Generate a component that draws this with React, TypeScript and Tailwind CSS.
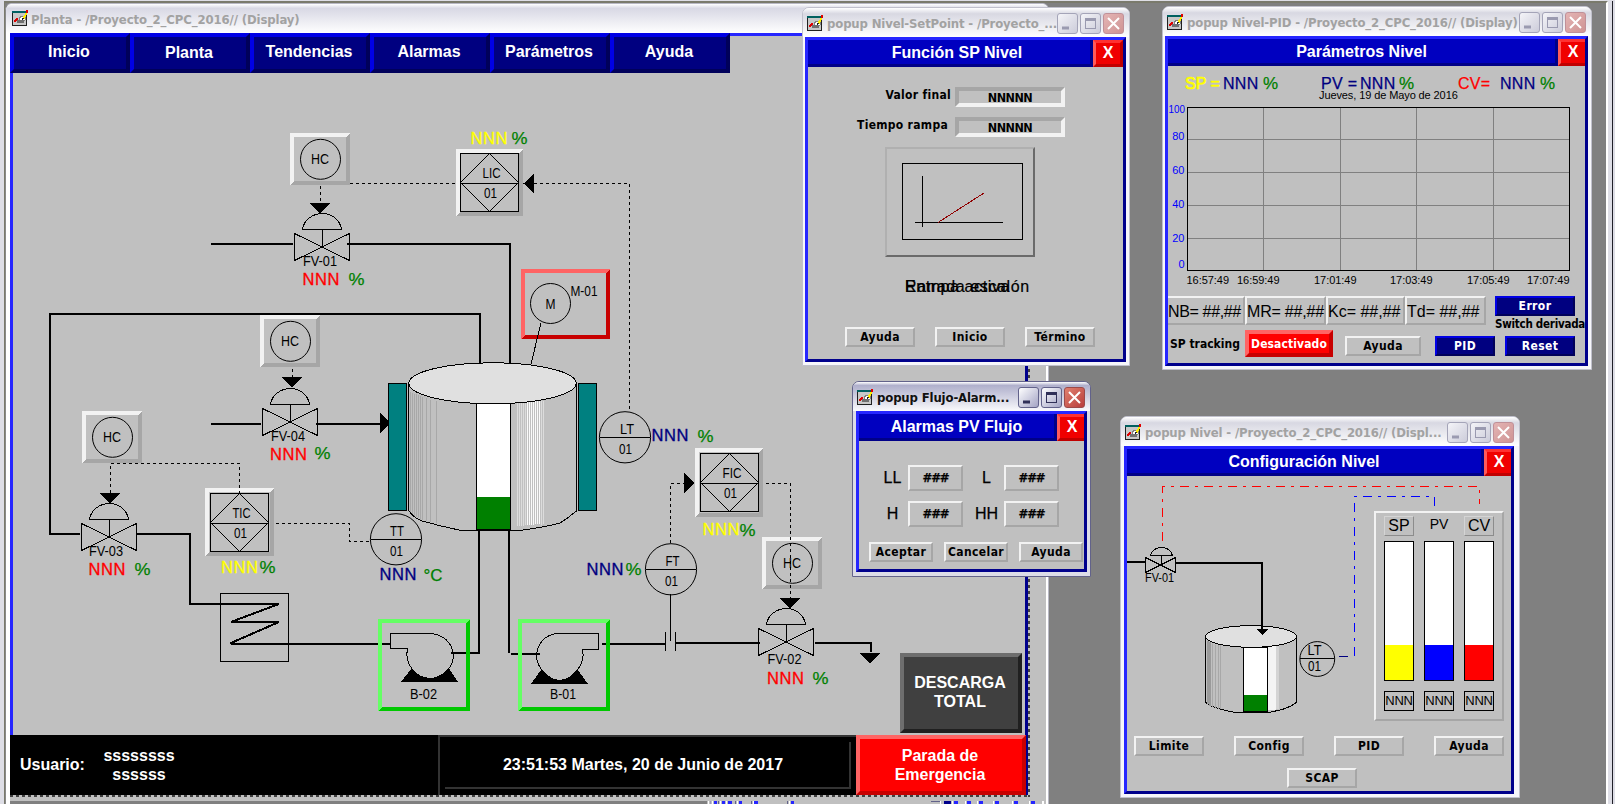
import React from "react";
import clsx from "clsx";

const TAHOMA = "font-['DejaVu_Sans_Condensed','DejaVu_Sans',sans-serif] font-bold";
const RAISED = "border-t-[#f2f2f2] border-l-[#f2f2f2] border-r-[#a6a6a6] border-b-[#a6a6a6]";
const SUNKEN = "border-t-[#a6a6a6] border-l-[#a6a6a6] border-r-[#f2f2f2] border-b-[#f2f2f2]";
const NAVY = "border-t-[#0000e6] border-l-[#0000e6] border-r-[#00005a] border-b-[#00005a] bg-[#000080] text-white";
const RED = "border-t-[#ff6464] border-l-[#ff6464] border-r-[#c80000] border-b-[#c80000] bg-[#ff0000] text-white";

/* ---------- window chrome ---------- */

function AppIcon() {
  return (
    <svg width="17" height="17" viewBox="0 0 17 17" shapeRendering="crispEdges" className="shrink-0">
      <rect x="0.5" y="1.5" width="14" height="14" fill="#c8c8c8" stroke="#202020" />
      <rect x="0" y="1" width="15" height="2" fill="#006060" />
      <path d="M7 8 L10 6 L13 6 L13 10 L8 11 Z" fill="#ffffff" stroke="#808080" />
      <path d="M2.5 12 L4.5 9 L6 10" stroke="#e00000" strokeWidth="2" fill="none" />
      <ellipse cx="8.5" cy="11.5" rx="3.5" ry="2" fill="#707070" />
      <path d="M11.5 8.5 L14.5 3" stroke="#ffee00" strokeWidth="2" />
      <path d="M10 10 L11.5 8" stroke="#202020" strokeWidth="1" />
      <rect x="14" y="0" width="2" height="3" fill="#e00000" />
    </svg>
  );
}

function CaptionButton({ kind, active }: { kind: "min" | "max" | "close"; active?: boolean }) {
  const close = kind === "close";
  const ink = close ? "#ffffff" : active ? "#303058" : "#9a9ab0";
  const fill = close
    ? active
      ? "bg-linear-to-br from-[#e08070] to-[#b83c3c] border-[#9c4a4a]"
      : "bg-linear-to-br from-[#e4b4b4] to-[#cf9494] border-[#c09098]"
    : active
      ? "bg-linear-to-br from-[#ffffff] to-[#a4a4c4] border-[#62628a]"
      : "bg-linear-to-br from-[#f4f4f8] to-[#ccccda] border-[#a4a4b8]";
  return (
    <span className={clsx("flex size-[21px] shrink-0 items-center justify-center rounded-[3px] border", fill)}>
      <svg width="19" height="19" viewBox="0 0 19 19" fill="none" stroke={ink}>
        {kind === "min" && <path d="M4 14 H11" strokeWidth="3" />}
        {kind === "max" && (
          <g shapeRendering="crispEdges">
            <rect x="4.5" y="4.5" width="10" height="10" />
            <path d="M4 5.5 H15" strokeWidth="2" />
          </g>
        )}
        {close && <path d="M4 4 L15 15 M15 4 L4 15" strokeWidth="2" />}
      </svg>
    </span>
  );
}

interface PopupProps {
  frame: string;
  body: string;
  caption: string;
  title: string;
  titleClass?: string;
  closeClass: string;
  active?: boolean;
  children: React.ReactNode;
}

function Popup({ frame, body, caption, title, titleClass, closeClass, active, children }: PopupProps) {
  return (
    <section
      className={clsx(
        "absolute flex flex-col rounded-t-[7px] border",
        active ? "border-[#62628a] bg-[#dcdce8]" : "border-[#c0c0cc] bg-[#f6f6fa]",
        frame,
      )}
    >
      <div
        className={clsx(
          "flex h-[29px] shrink-0 items-center rounded-t-[6px] bg-linear-to-b from-[#ffffff] pt-px pr-[5px] pl-[4px]",
          active ? "via-[#b0b0cc] via-12% to-[#fafafc]" : "via-[#d8d8e2] via-20% to-[#ffffff]",
        )}
      >
        <AppIcon />
        <span
          className={clsx(
            TAHOMA,
            "ml-[3px] min-w-0 flex-1 pt-[2px] text-[13px] leading-[18px] tracking-[-0.14px] whitespace-nowrap",
            active ? "text-[#101010]" : "text-[#a2a2a2]",
          )}
        >
          {caption}
        </span>
        <span className="flex gap-[2px]">
          <CaptionButton kind="min" active={active} />
          <CaptionButton kind="max" active={active} />
          <CaptionButton kind="close" active={active} />
        </span>
      </div>
      <div
        className={clsx(
          "flex min-h-0 flex-1 flex-col overflow-hidden border-[3px] border-t-[#2626ff] border-r-[#00008c] border-b-[#00008c] border-l-[#2626ff] bg-[#c0c0c0]",
          body,
        )}
      >
        <header className="flex h-[27px] shrink-0">
          <h2
            className={clsx(
              "flex-1 border-r-[3px] border-b-[3px] border-[#000088] bg-[#0000c0] text-center text-[16px] leading-[25px] font-bold text-white",
              titleClass,
            )}
          >
            {title}
          </h2>
          <button
            className={clsx(
              "h-[27px] border-[3px] border-t-[#ff3030] border-r-[#c00000] border-b-[#c00000] border-l-[#ff5a5a] bg-[#f00000] pb-[2px] text-center text-[16px] leading-[18px] font-bold text-white",
              closeClass,
            )}
          >
            X
          </button>
        </header>
        {children}
      </div>
    </section>
  );
}

function Btn({ children, className, tone = RAISED }: { children: React.ReactNode; className?: string; tone?: string }) {
  return (
    <button
      className={clsx(
        TAHOMA,
        "flex h-[20px] shrink-0 items-center justify-center border-2 text-[12px] leading-[14px] tracking-[0.4px] whitespace-nowrap",
        tone,
        className,
      )}
    >
      {children}
    </button>
  );
}

/* ---------- SVG primitives for the process diagrams ---------- */

function Bevel({ x, y, w, h, t = 4, light = "#f2f2f2", dark = "#a6a6a6" }: { x: number; y: number; w: number; h: number; t?: number; light?: string; dark?: string }) {
  return (
    <g>
      <path d={`M${x} ${y} h${w} l${-t} ${t} h${2 * t - w} v${h - 2 * t} l${-t} ${t} Z`} fill={light} />
      <path d={`M${x + w} ${y + h} h${-w} l${t} ${-t} h${w - 2 * t} v${2 * t - h} l${t} ${-t} Z`} fill={dark} />
    </g>
  );
}

function Label({ x, y, w, size = 14, children }: { x: number; y: number; w: number; size?: number; children: string }) {
  return (
    <text x={x} y={y} fontSize={size} textLength={w} lengthAdjust="spacingAndGlyphs" fill="#000">
      {children}
    </text>
  );
}

function Reading({ x, y, color, ux, uy, unit = "%" }: { x: number; y: number; color: string; ux: number; uy: number; unit?: string }) {
  return (
    <g>
      <text x={x - 1} y={y} fontSize="16.5" textLength="37" fill={color} stroke={color} strokeWidth="0.35">NNN</text>
      <text x={ux - 0.5} y={uy} fontSize="16.5" textLength={unit === "%" ? 16 : 19} lengthAdjust="spacingAndGlyphs" fill="#008000" stroke="#008000" strokeWidth="0.25">{unit}</text>
    </g>
  );
}

const thin = { fill: "none", stroke: "#000", strokeWidth: 1 } as const;
const pipe = { fill: "none", stroke: "#000", strokeWidth: 2 } as const;
const dash = { fill: "none", stroke: "#000", strokeWidth: 1, strokeDasharray: "3 3" } as const;

function HandControl({ x, y }: { x: number; y: number }) {
  return (
    <g>
      <Bevel x={x} y={y} w={60} h={52} />
      <circle cx={x + 30.5} cy={y + 26.3} r="20" {...thin} shapeRendering="auto" />
      <Label x={x + 21} y={y + 31} w={18}>HC</Label>
    </g>
  );
}

function Valve({ x, y, name, lx, ly }: { x: number; y: number; name: string; lx: number; ly: number }) {
  return (
    <g>
      <path d={`M${x - 27.5} ${y - 13.5} V${y + 13.5} L${x + 27.5} ${y - 13.5} V${y + 13.5} Z`} {...thin} />
      <path d={`M${x + 0.5} ${y} V${y - 17.5}`} {...thin} />
      <path d={`M${x - 19.5} ${y - 17.5} C${x - 18} ${y - 28} ${x - 8} ${y - 33.5} ${x} ${y - 33.5} C${x + 9} ${y - 33.5} ${x + 18} ${y - 28} ${x + 19.5} ${y - 17.5} Z`} {...thin} />
      <Label x={lx} y={ly} w={34}>{name}</Label>
    </g>
  );
}

function Controller({ x, y, name, w }: { x: number; y: number; name: string; w: number }) {
  return (
    <g>
      <rect x={x} y={y} width="58" height="58" {...thin} />
      <path d={`M${x} ${y + 30} H${x + 58} M${x} ${y + 29} L${x + 29} ${y} L${x + 58} ${y + 29} L${x + 29} ${y + 58} Z`} {...thin} />
      <Label x={x + 22} y={y + 24.5} w={w}>{name}</Label>
      <Label x={x + 23.5} y={y + 44.5} w={13}>01</Label>
    </g>
  );
}

function Transmitter({ x, y, name, dx }: { x: number; y: number; name: string; dx: number }) {
  return (
    <g>
      <circle cx={x} cy={y} r="25.6" {...thin} shapeRendering="auto" />
      <path d={`M${x - 25} ${y + 0.2} H${x + 25}`} {...thin} />
      <Label x={x + dx} y={y - 3} w={14}>{name}</Label>
      <Label x={x - 6} y={y + 17} w={13}>01</Label>
    </g>
  );
}

function PlantDiagram() {
  return (
    <svg
      width="1015"
      height="662"
      viewBox="10 73 1015 662"
      shapeRendering="crispEdges"
      className="block shrink-0"
      fontFamily="'Liberation Sans', Arial, sans-serif"
    >
      {/* pipes */}
      <g {...pipe}>
        <path d="M211 244 H293 M347 244 H510 V363" />
        <path d="M80 534 H50 V314 H480 V363" />
        <path d="M136 534 H190 V604 H279 L231 622 H279 L231 643 L232 644 H390" />
        <path d="M211 424 H261 M316 424 H382" />
        <path d="M451 653 H479 V531 M509 531 V653 M511 654 H540" />
        <path d="M602 644 H666 M675 643 H760 M815 643 H871 V652" />
      </g>
      <rect x="220.5" y="593.5" width="68" height="68" {...thin} />

      {/* hand stations and controllers */}
      <HandControl x={290} y={133} />
      <HandControl x={260} y={315} />
      <HandControl x={82} y={411} />
      <HandControl x={762} y={537} />
      <Bevel x={456} y={149} w={67} h={67} />
      <Controller x={460.5} y={153.5} name="LIC" w={18} />
      <Bevel x={205} y={488} w={69} h={68} />
      <Controller x={210.5} y={493.5} name="TIC" w={18} />
      <Bevel x={695} y={448} w={68} h={69} />
      <Controller x={700.5} y={453.5} name="FIC" w={19} />

      {/* signals */}
      <g {...dash}>
        <path d="M350 183.5 H456 M534 183.5 H629.5 V411" />
        <path d="M320.5 186 V203 M292.5 369 V377" />
        <path d="M110.5 493 V463.5 H239.5 V493" />
        <path d="M276 523.5 H349.5 V541.5 H371" />
        <path d="M670.5 543 V483.5 H684 M766 483.5 H790.5 V598" />
      </g>
      <g fill="#000">
        <path d="M310 203 H330 L320 213.5 Z" />
        <path d="M282 377 H302 L292 387.5 Z" />
        <path d="M100 493 H120 L110 503.5 Z" />
        <path d="M780 598 H800 L790 608.5 Z" />
        <path d="M860 653 H880 L870 663.5 Z" />
        <path d="M534 173.5 V193.5 L523.5 183.5 Z" />
        <path d="M684 473 V493 L694.5 483 Z" />
        <path d="M380 413 V433 L390.5 423 Z" />
      </g>

      {/* valves */}
      <Valve x={322} y={247} name="FV-01" lx={303} ly={266} />
      <Valve x={290} y={422} name="FV-04" lx={271} ly={440.5} />
      <Valve x={109} y={537} name="FV-03" lx={89} ly={555.5} />
      <Valve x={786} y={642} name="FV-02" lx={767.5} ly={663.5} />

      {/* agitator motor */}
      <Bevel x={521} y={269} w={89} h={70} light="#ff6464" dark="#c80000" />
      <circle cx="550.5" cy="303.5" r="20" {...thin} shapeRendering="auto" />
      <Label x={545.5} y={309} w={10}>M</Label>
      <Label x={570.5} y={296} w={27}>M-01</Label>
      <path d="M541 323 L531 364" {...thin} />

      {/* tank */}
      <path d="M408.5 383 V510 Q412 517 422 521 Q440 526 461 530.5 H520 Q545 527 560 523 Q568 518 576.5 511 V383" {...thin} fill="#c0c0c0" />
      <path d="M410.5 392V512 M412.5 393V514 M414.5 394V516 M416.5 394V517 M418.5 395V518 M420.5 396V520 M422.5 397V520 M426.5 398V521 M430.5 400V522 M436.5 401V523" stroke="#a8a8a8" fill="none" />
      <path d="M517.5 403V526 M519.5 403V526 M521.5 402V526 M523.5 402V526 M525.5 402V525 M541.5 401V525 M543.5 401V524" stroke="#dcdcdc" fill="none" />
      <path d="M527.5 402V525 M529.5 402V525 M531.5 402V525 M533.5 402V525 M535.5 401V524 M537.5 401V524 M539.5 401V524" stroke="#fafafa" fill="none" />
      <ellipse cx="492.5" cy="383.3" rx="83.7" ry="20.5" fill="#e0e0e0" stroke="#000" />
      <rect x="476.5" y="403.5" width="34" height="126" fill="#fff" stroke="#000" />
      <rect x="477" y="497" width="33" height="32" fill="#008000" />
      <path d="M476 530 H511" {...pipe} />
      <rect x="388.5" y="383.5" width="18" height="127" fill="#008080" stroke="#000" />
      <rect x="578.5" y="383.5" width="18" height="127" fill="#008080" stroke="#000" />

      {/* transmitters */}
      <Transmitter x={396} y={539.3} name="TT" dx={-6} />
      <Transmitter x={625} y={437.3} name="LT" dx={-5} />
      <Transmitter x={671} y={569.3} name="FT" dx={-5.5} />
      <path d="M670.5 594 V641 M665.5 632 V651 M675.5 632 V651" {...thin} />

      {/* pumps */}
      <Bevel x={378} y={619} w={92} h={92} light="#64ff64" dark="#00c800" />
      <path d="M390.5 633.5 H430 C443 634 453 643 453.5 656 C453 668 442 678 430 678.5 C416 678 404 664 407.5 648.5 H390.5 Z" {...thin} />
      <path d="M411 669 Q420 678 430 678.5 Q441 678 449 668.5 L458 682 H401 Z" />
      <Label x={410} y={699} w={27}>B-02</Label>
      <Bevel x={518} y={619} w={92} h={92} light="#64ff64" dark="#00c800" />
      <path d="M598.5 633.5 H558 C546 634 537 643 536.5 656 C537 668 548 680 560 680.5 C573 679 586 664 582.5 649.5 H598.5 Z" {...thin} />
      <path d="M541 670 Q550 680 560 680.5 Q571 679 578 670 L588 684 H531 Z" />
      <Label x={550} y={699} w={26}>B-01</Label>

      {/* readings */}
      <Reading x={303.5} y={285} color="#ff0000" ux={349} uy={285} />
      <Reading x={271} y={460} color="#ff0000" ux={315} uy={459} />
      <Reading x={89.5} y={575} color="#ff0000" ux={135} uy={575} />
      <Reading x={768} y={684} color="#ff0000" ux={813} uy={684} />
      <Reading x={471.5} y={143.5} color="#ffff00" ux={512} uy={144} />
      <Reading x={222} y={573} color="#ffff00" ux={260} uy={573} />
      <Reading x={703.5} y={534.5} color="#ffff00" ux={740} uy={535.5} />
      <Reading x={380.5} y={580} color="#000080" ux={424} uy={581} unit="°C" />
      <Reading x={652.5} y={441} color="#000080" ux={698} uy={441.5} />
      <Reading x={587.5} y={575} color="#000080" ux={626} uy={575} />
    </svg>
  );
}

/* ---------- main window ---------- */

const NAV = ["Inicio", "Planta", "Tendencias", "Alarmas", "Parámetros", "Ayuda"];

const TICKS: [number, number, string][] = [
  [708, 1, "#ffffff"], [710, 1, "#9a9ab8"], [712, 1, "#ffffff"], [714, 3, "#2626ff"], [718, 1, "#62628a"], [720, 1, "#ffffff"],
  [722, 3, "#2626ff"], [726, 1, "#ffffff"], [728, 4, "#2626ff"], [735, 1, "#62628a"], [737, 1, "#ffffff"], [739, 3, "#2626ff"],
  [751, 1, "#62628a"], [753, 1, "#ffffff"], [754, 4, "#2626ff"], [787, 1, "#62628a"], [789, 1, "#ffffff"], [791, 3, "#2626ff"],
  [940, 1, "#ffffff"], [944, 7, "#00008c"], [952, 1, "#ffffff"], [954, 4, "#2626ff"], [965, 1, "#ffffff"], [967, 4, "#2626ff"],
  [977, 1, "#ffffff"], [979, 4, "#2626ff"], [993, 1, "#ffffff"], [995, 4, "#2626ff"], [1012, 1, "#ffffff"], [1014, 4, "#2626ff"],
  [1029, 1, "#ffffff"], [1031, 4, "#2626ff"], [1042, 2, "#ffffff"],
];

function MainWindow() {
  return (
    <section className="absolute top-[3px] left-[5px] flex h-[801px] w-[1044px] flex-col overflow-hidden rounded-t-[7px] border-t border-r border-l border-[#b8b8c4] border-l-[#8a8a8a] bg-white">
      <div className="flex h-[29px] shrink-0 items-center bg-linear-to-b from-[#ffffff] via-[#d8d8e4] via-15% to-[#ffffff] pl-[6px]">
        <AppIcon />
        <span className={clsx(TAHOMA, "ml-[2px] pt-[3px] text-[13px] leading-[18px] tracking-[-0.12px] whitespace-nowrap text-[#a2a2a2]")}>
          Planta - /Proyecto_2_CPC_2016// (Display)
        </span>
      </div>
      <div className="ml-[4px] mr-[2px] flex flex-1 bg-[#c0c0c0]">
        <div className="flex w-[1020px] shrink-0 flex-col">
          <div className="relative flex h-[762px] w-[1018px] shrink-0 flex-col border-t-[3px] border-r-[3px] border-l-[3px] border-t-[#2626ff] border-r-[#00008c] border-l-[#2626ff]">
            <nav className="-mt-[3px] -ml-[3px] flex">
              {NAV.map((item) => (
                <button
                  key={item}
                  className={clsx("h-[40px] w-[120px] border-4 pr-[2px] text-center text-[16px] font-bold", NAVY, item === "Planta" ? "pb-px" : "pb-[3px]")}
                >
                  {item}
                </button>
              ))}
            </nav>
            <div className="-ml-[3px] w-[1015px]">
              <svg width="3" height="662" className="float-left mr-[-3px] block">
                <rect width="3" height="662" fill="#2626ff" />
              </svg>
              <PlantDiagram />
            </div>
            <button className="absolute top-[617px] left-[887px] h-[80px] w-[122px] border-4 border-t-[#6e6e6e] border-r-[#202020] border-b-[#202020] border-l-[#6e6e6e] bg-[#404040] pr-[2px] pb-[3px] text-[16px] leading-[19px] font-bold text-white">
              DESCARGA
              <br />
              TOTAL
            </button>
            <footer className="-mr-px -ml-[3px] flex h-[60px] shrink-0 bg-black text-[16px] leading-[19px] font-bold text-white">
              <div className="flex w-[428px] items-center pl-[10px]">
                <span className="w-[83px] pb-[2px]">Usuario:</span>
                <span className="w-[72px] text-center">
                  ssssssss
                  <br />
                  ssssss
                </span>
              </div>
              <div className="flex w-[418px] border-t-2 border-l-2 border-[#333333] pt-[5px] pr-[5px] pb-[6px] pl-[5px]">
                <div className="flex flex-1 items-center justify-center border-r-2 border-b-2 border-[#333333] pr-[8px]">
                  23:51:53 Martes, 20 de Junio de 2017
                </div>
              </div>
              <button className={clsx("h-[60px] w-[170px] border-4 pr-[2px]", RED)}>
                Parada de
                <br />
                Emergencia
              </button>
            </footer>
          </div>
          <div className="h-[2px] w-[1020px] bg-[repeating-linear-gradient(90deg,#404040_0_3px,#c0c0c0_3px_6px)]" />
          <svg width="1036" height="7" viewBox="10 797 1036 7" shapeRendering="crispEdges" className="block">
            <rect x="10" y="801" width="697" height="3" fill="#808080" />
            {TICKS.map(([x, w, fill]) => (
              <rect key={x} x={x} y="801" width={w} height="3" fill={fill} />
            ))}
            <rect x="931" y="801" width="9" height="1" fill="#62628a" />
          </svg>
        </div>
        <div className="-ml-[2px] h-[764px] w-[2px] bg-[repeating-linear-gradient(180deg,#404040_0_3px,#c0c0c0_3px_6px)]" />
      </div>
    </section>
  );
}

/* ---------- popups ---------- */

function SetPointPopup() {
  return (
    <Popup
      frame="left-[802px] top-[7px] h-[359px] w-[328px]"
      body="ml-[2px] mr-[3px] mb-[3px]"
      caption="popup Nivel-SetPoint - /Proyecto_..."
      title="Función SP Nivel"
      titleClass="pl-[16px]"
      closeClass="w-[30px]"
    >
      <div className="mt-[20px] mr-[58px] flex flex-col gap-[10px]">
        {["Valor final", "Tiempo rampa"].map((name) => (
          <label key={name} className={clsx(TAHOMA, "flex items-center justify-end gap-[4px] text-[12px] tracking-[0.3px]")}>
            <span className={clsx("pb-[4px] leading-[14px]", name === "Tiempo rampa" && "mr-[3px]")}>{name}</span>
            <span className={clsx("h-[20px] w-[110px] border-4 text-center text-[12.5px] leading-[13px] tracking-[-0.5px]", SUNKEN)}>NNNNN</span>
          </label>
        ))}
      </div>
      <div className="mt-[10px] ml-[77px] h-[110px] w-[150px] border-2 border-t-[#b0b0b0] border-r-[#6a6a6a] border-b-[#6a6a6a] border-l-[#b0b0b0]">
        <svg width="146" height="106" viewBox="887 149 146 106" fill="none" stroke="#000" shapeRendering="crispEdges">
          <rect x="902.5" y="163.5" width="120" height="76" />
          <path d="M922.5 176 V227 M915 222.5 H1003" />
          <path d="M938 222.5 L984 193" stroke="#900000" />
        </svg>
      </div>
      <div className="mt-[20px] ml-[97px] grid text-[16px] leading-[20px] [-webkit-text-stroke:0.2px_#000]">
        <span className="col-start-1 row-start-1 tracking-[0.6px]">Entrada escalón</span>
        <span className="col-start-1 row-start-1 tracking-[0.6px]">Rampa activa</span>
      </div>
      <div className="mt-[30px] ml-[37px] flex gap-[20px]">
        <Btn className="w-[70px]">Ayuda</Btn>
        <Btn className="w-[70px]">Inicio</Btn>
        <Btn className="w-[70px]">Término</Btn>
      </div>
    </Popup>
  );
}

const TIMES: [string, number][] = [
  ["16:57:49", 1187], ["16:59:49", 1237.5], ["17:01:49", 1314.5], ["17:03:49", 1390.5], ["17:05:49", 1467.5], ["17:07:49", 1527.5],
];
const SCALE: [string, number][] = [["100", 113], ["80", 140], ["60", 174], ["40", 208], ["20", 242], ["0", 268]];

function TrendChart() {
  return (
    <svg width="417" height="187" viewBox="1168 101 417 187" shapeRendering="crispEdges" className="block shrink-0" fontFamily="'Liberation Sans', Arial, sans-serif" fontSize="11">
      <path d="M1263.5 108V270 M1340.5 108V270 M1416.5 108V270 M1493.5 108V270 M1188 139.5H1569 M1188 172.5H1569 M1188 205.5H1569 M1188 238.5H1569" stroke="#808080" />
      <rect x="1187.5" y="107.5" width="382" height="163" fill="none" stroke="#000" />
      {SCALE.map(([t, y]) => (
        <text key={t} x={t === "100" ? 1185 : 1184.5} y={y} textAnchor="end" fill="#0000ff" textLength={t === "100" ? 16.5 : undefined} lengthAdjust="spacingAndGlyphs">
          {t}
        </text>
      ))}
      {TIMES.map(([t, x]) => (
        <text key={t} x={x - 0.5} y="284" textLength="42.5">{t}</text>
      ))}
    </svg>
  );
}

function Pct() {
  return <span className="text-[17px] text-[#008000] [-webkit-text-stroke:0.25px_#008000]">%</span>;
}

function PidPopup() {
  return (
    <Popup
      frame="left-[1162px] top-[6px] h-[364px] w-[430px]"
      body="ml-[2px] mr-[3px] mb-[3px]"
      caption="popup Nivel-PID - /Proyecto_2_CPC_2016// (Display)"
      title="Parámetros Nivel"
      closeClass="w-[27px] border-r-0"
    >
      <div className="mt-[9px] flex h-[18px] shrink-0 pl-[17px] text-[16px] leading-[18px] tracking-[0.3px] whitespace-nowrap text-[#000080] [-webkit-text-stroke:0.25px_#000080]">
        <div className="flex w-[136px]">
          <span className="w-[38px] tracking-[0] text-[#ffff00] [-webkit-text-stroke:0.7px_#ffff00]">SP =</span>
          <span className="w-[40px]">NNN</span>
          <Pct />
        </div>
        <div className="flex w-[137px]">
          <span className="w-[39px]">PV =</span>
          <span className="w-[39px]">NNN</span>
          <Pct />
        </div>
        <div className="flex">
          <span className="w-[42px] text-[#ff0000] [-webkit-text-stroke:0.25px_#ff0000]">CV=</span>
          <span className="w-[40px]">NNN</span>
          <Pct />
        </div>
      </div>
      <div className="-mt-[3px] mb-px h-[10px] shrink-0 pl-[151px] text-[11px] leading-[11px] tracking-[-0.1px] whitespace-nowrap">Jueves, 19 de Mayo de 2016</div>
      <TrendChart />
      <div className="mt-[8px] flex h-[29px] shrink-0">
        {[
          ["NB= ##,##", "w-[77px] border-l-0 tracking-[-0.35px]"],
          ["MR= ##,##", "w-[81px] tracking-[-0.2px]"],
          ["Kc= ##,##", "w-[79px] tracking-[0]"],
          ["Td= ##,##", "w-[81px] tracking-[0]"],
        ].map(([t, c]) => (
          <div key={t} className={clsx("overflow-visible border-2 text-[16px] leading-[27px] whitespace-nowrap", RAISED, c)}>
            {t}
          </div>
        ))}
        <div className="ml-[9px] flex flex-col">
          <Btn tone={NAVY} className="w-[80px]">Error</Btn>
          <span className={clsx(TAHOMA, "text-[11.5px] leading-[16px] tracking-[-0.25px] whitespace-nowrap")}>Switch derivada</span>
        </div>
      </div>
      <div className="mt-[5px] flex items-center pl-[2px]">
        <span className={clsx(TAHOMA, "w-[75px] shrink-0 text-[12px] leading-[14px] whitespace-nowrap")}>SP tracking</span>
        <Btn tone={RED} className="h-[27px] w-[88px] border-4 tracking-[0.1px]!">Desactivado</Btn>
        <Btn className="mt-[5px] ml-[12px] w-[76px]">Ayuda</Btn>
        <Btn tone={NAVY} className="mt-[5px] ml-[14px] w-[60px]">PID</Btn>
        <Btn tone={NAVY} className="mt-[5px] ml-[10px] w-[70px]">Reset</Btn>
      </div>
    </Popup>
  );
}

function AlarmPopup() {
  const rows = [["LL", "L"], ["H", "HH"]];
  return (
    <Popup
      frame="left-[852px] top-[381px] h-[196px] w-[239px]"
      body="ml-[3px] mr-[3px] mb-[4px]"
      caption="popup Flujo-Alarm..."
      title="Alarmas PV Flujo"
      closeClass="w-[27px] border-r-0"
      active
    >
      <div className="mt-[24px] flex flex-col gap-[10px]">
        {rows.map(([a, b]) => (
          <div key={a} className="flex items-center text-[16px] leading-[20px] [-webkit-text-stroke:0.25px_#000]">
            <span className="ml-[18px] w-[31px] text-center">{a}</span>
            <span className={clsx(TAHOMA, "h-[26px] w-[55px] border-2 text-center text-[13px] leading-[21px] tracking-[-1.2px]", RAISED)}>###</span>
            <span className="w-[41px] pl-[6px] text-center">{b}</span>
            <span className={clsx(TAHOMA, "h-[26px] w-[55px] border-2 text-center text-[13px] leading-[21px] tracking-[-1.2px]", RAISED)}>###</span>
          </div>
        ))}
      </div>
      <div className="mt-[15px] ml-[10px] flex gap-[11px]">
        <Btn className="w-[64px]">Aceptar</Btn>
        <Btn className="w-[64px]">Cancelar</Btn>
        <Btn className="w-[64px]">Ayuda</Btn>
      </div>
    </Popup>
  );
}

function LevelDiagram() {
  return (
    <svg width="247" height="248" viewBox="1127 476 247 248" shapeRendering="crispEdges" className="block shrink-0 overflow-visible" fontFamily="'Liberation Sans', Arial, sans-serif">
      <path d="M1162.5 541 V486.5 H1479.5 V504" fill="none" stroke="#ff0000" strokeDasharray="9 6 3 6" />
      <path d="M1354.5 656 V496.5 H1434.5 V506" fill="none" stroke="#0000ff" strokeDasharray="9 6 3 6" />
      <path d="M1339 656.5 H1348" stroke="#000080" />
      <path d="M1127 562 H1145 M1176 563 H1262 V630" {...pipe} />
      <path d="M1145.5 557.5 V572.5 L1175.5 557.5 V572.5 Z M1161.5 565 V555.5 M1150.5 555.5 Q1153 547.5 1161.5 547.5 Q1170 547.5 1172.5 555.5 Z" {...thin} />
      <Label x={1145} y={582} w={29} size={12}>FV-01</Label>
      <path d="M1205.5 636 V702 Q1210 708 1236 712.5 H1268 Q1290 709 1296.5 702 V636" {...thin} fill="#c0c0c0" />
      <path d="M1207.5 641V704 M1209.5 642V706" stroke="#9a9a9a" strokeWidth="2" />
      <path d="M1212.5 644V707 M1215.5 645V708 M1218.5 645V709 M1220.5 645V709" stroke="#a8a8a8" />
      <rect x="1268" y="645" width="8" height="65" fill="#f4f4f4" />
      <rect x="1276" y="645" width="3" height="64" fill="#d4d4d4" />
      <ellipse cx="1251" cy="636.5" rx="45.5" ry="10.8" fill="#e0e0e0" stroke="#000" />
      <rect x="1243.5" y="647.5" width="24" height="64" fill="#fff" stroke="#000" />
      <rect x="1244" y="695" width="23" height="16" fill="#008000" />
      <path d="M1243 712 H1268" {...pipe} />
      <path d="M1262 620 V630" {...pipe} />
      <path d="M1257 629 H1268 L1262.5 635 Z" />
      <circle cx="1317.3" cy="659" r="17.4" {...thin} shapeRendering="auto" />
      <path d="M1300 658.5 H1334" {...thin} />
      <Label x={1307.5} y={654.5} w={14}>LT</Label>
      <Label x={1308} y={670.5} w={13}>01</Label>
    </svg>
  );
}

function LevelPopup() {
  const bars = [
    { name: "SP", fill: "bg-[#ffff00]" },
    { name: "PV", fill: "bg-[#0000ff]" },
    { name: "CV", fill: "bg-[#ff0000]" },
  ];
  return (
    <Popup
      frame="left-[1120px] top-[416px] h-[382px] w-[400px]"
      body="ml-[3px] mr-[5px] mb-[3px]"
      caption="popup Nivel - /Proyecto_2_CPC_2016// (Displ..."
      title="Configuración Nivel"
      closeClass="w-[27px] border-r-0"
    >
      <div className="flex h-[248px] shrink-0">
        <LevelDiagram />
        <div className={clsx("mt-[35px] flex h-[210px] w-[130px] gap-[10px] border-2 px-[8px] pt-[3px]", RAISED)}>
          {bars.map((b) => (
            <div key={b.name} className="flex w-[30px] flex-col items-center">
              <div
                className={clsx(
                  "h-[20px] w-[30px] border text-center",
                  b.name === "PV" ? "border-transparent text-[14px] leading-[14px]" : "border-t-[#d4d4d4] border-r-[#8c8c8c] border-b-[#8c8c8c] border-l-[#d4d4d4] text-[16px] leading-[18px]",
                )}
              >
                {b.name}
              </div>
              <div className="mt-[5px] flex h-[140px] w-[30px] flex-col border border-black bg-white">
                <div className={clsx("mt-auto h-[35px]", b.fill)} />
              </div>
              <div className="mt-[10px] flex h-[20px] w-[30px] items-center justify-center border border-black text-[13px] leading-[18px] tracking-[-0.3px]">NNN</div>
            </div>
          ))}
        </div>
      </div>
      <div className="mt-[12px] ml-[7px] flex gap-[30px]">
        <Btn className="w-[70px]">Limite</Btn>
        <Btn className="w-[70px]">Config</Btn>
        <Btn className="w-[70px]">PID</Btn>
        <Btn className="w-[70px]">Ayuda</Btn>
      </div>
      <Btn className="mt-[12px] ml-[160px] w-[70px]">SCAP</Btn>
    </Popup>
  );
}

export default function App() {
  return (
    <main className="relative h-[804px] w-[1615px] overflow-hidden bg-[#dedee6] font-['Liberation_Sans',Arial,sans-serif] text-black">
      <div className="flex h-full pt-px pl-[4px]">
        <div className="w-[1604px] border-t-2 border-r-2 border-l border-t-[#7a7a6c] border-r-white border-l-[#7a7a6c] bg-[#808080]" />
        <div className="ml-[4px] w-px bg-[#202028]" />
      </div>
      <MainWindow />
      <SetPointPopup />
      <PidPopup />
      <AlarmPopup />
      <LevelPopup />
    </main>
  );
}
